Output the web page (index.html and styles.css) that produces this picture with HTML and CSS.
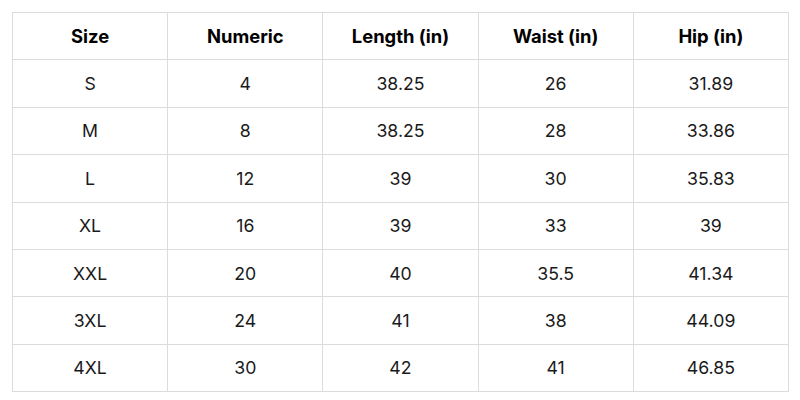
FILE: index.html
```html
<!DOCTYPE html>
<html>
<head>
<meta charset="utf-8">
<link rel="stylesheet" href="styles.css">
</head>
<body>
<table class="size-table">
  <thead>
    <tr><th>Size</th><th>Numeric</th><th>Length (in)</th><th>Waist (in)</th><th>Hip (in)</th></tr>
  </thead>
  <tbody>
    <tr><td>S</td><td>4</td><td>38.25</td><td>26</td><td>31.89</td></tr>
    <tr><td>M</td><td>8</td><td>38.25</td><td>28</td><td>33.86</td></tr>
    <tr><td>L</td><td>12</td><td>39</td><td>30</td><td>35.83</td></tr>
    <tr><td>XL</td><td>16</td><td>39</td><td>33</td><td>39</td></tr>
    <tr><td>XXL</td><td>20</td><td>40</td><td>35.5</td><td>41.34</td></tr>
    <tr><td>3XL</td><td>24</td><td>41</td><td>38</td><td>44.09</td></tr>
    <tr><td>4XL</td><td>30</td><td>42</td><td>41</td><td>46.85</td></tr>
  </tbody>
</table>
</body>
</html>
```
FILE: styles.css
```css
html, body {
  margin: 0;
  padding: 0;
  background: #ffffff;
}
body {
  padding: 12px 0 0 12px;
  font-family: "Inter", "Open Sans", sans-serif;
  color: #111;
}
.size-table {
  border-collapse: collapse;
  width: 777px;
  table-layout: fixed;
}
.size-table th,
.size-table td {
  border: 1px solid #dcdcdc;
  height: 46.4px;
  padding: 0;
  text-align: center;
  vertical-align: middle;
}
.size-table th {
  font-size: 18.4px;
  font-weight: 700;
  color: #000;
}
.size-table td {
  font-size: 17.7px;
  font-weight: 400;
  color: #1a1a1a;
}
```
